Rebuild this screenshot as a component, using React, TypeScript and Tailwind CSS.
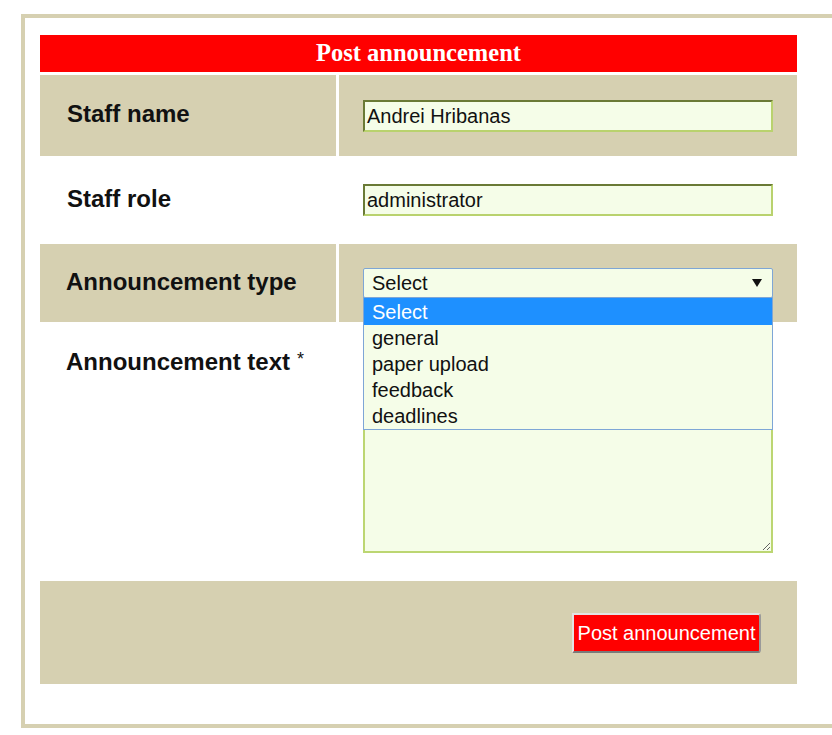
import React from "react";

const sans = { fontFamily: '"Liberation Sans", Arial, sans-serif' };

function TextInput({ value }: { value: string }) {
  return (
    <div
      className="w-[410px] h-[32px] bg-[#f5fde8] border-2 border-t-[#6a7a36] border-l-[#6a7a36] border-b-[#b9d26e] border-r-[#b9d26e] flex items-center pl-[2px] text-[20px] text-[#111] leading-none"
      style={sans}
    >
      {value}
    </div>
  );
}

const options = ["Select", "general", "paper upload", "feedback", "deadlines"];

export default function App() {
  return (
    <div className="w-[832px] h-[735px] bg-white overflow-hidden pt-[14px] pl-[21px]" style={sans}>
      <div className="w-[830px] border-l-4 border-t-4 border-b-4 border-[#d6d0b1] pt-[17px] pl-[15px] pb-[40px]">
        <div className="w-[757px] flex flex-col gap-[3px]">
          {/* Header */}
          <div
            className="h-[37px] bg-[#ff0000] flex items-center justify-center text-white font-bold text-[24.5px]"
            style={{ fontFamily: '"Liberation Serif", "Times New Roman", serif' }}
          >
            Post announcement
          </div>

          {/* Row 1 */}
          <div className="grid grid-cols-[296px_458px] gap-[3px] h-[81px]">
            <div className="bg-[#d6d0b1] flex items-center pl-[27px] pb-[3px] font-bold text-[24px] text-[#111]">
              Staff name
            </div>
            <div className="bg-[#d6d0b1] flex items-center pl-[24px]">
              <TextInput value="Andrei Hribanas" />
            </div>
          </div>

          {/* Row 2 */}
          <div className="grid grid-cols-[296px_458px] gap-[3px] h-[82px]">
            <div className="bg-white flex items-center pl-[27px] pb-[3px] font-bold text-[24px] text-[#111]">
              Staff role
            </div>
            <div className="bg-white flex items-center pl-[24px]">
              <TextInput value="administrator" />
            </div>
          </div>

          {/* Row 3 */}
          <div className="grid grid-cols-[296px_458px] gap-[3px] h-[78px]">
            <div className="bg-[#d6d0b1] flex items-center pl-[26px] pb-[2px] font-bold text-[24px] text-[#111]">
              Announcement type
            </div>
            <div className="bg-[#d6d0b1] flex items-center pl-[24px] relative z-10">
              <div className="relative">
                <div className="w-[410px] h-[30px] bg-[#f5fde8] border border-[#7ea6d6] rounded-[2px] flex items-center justify-between pl-[8px] pr-[10px] text-[20px] text-[#111] leading-none">
                  <span>Select</span>
                  <svg width="10" height="9" viewBox="0 0 10 9">
                    <polygon points="0,0 10,0 5,8" fill="#111" />
                  </svg>
                </div>
                <div className="absolute left-0 top-[29px] w-[410px] bg-[#f5fde8] border border-[#7ea6d6] flex flex-col text-[20px] leading-none">
                  {options.map((o, i) => (
                    <div
                      key={o}
                      className={
                        i === 0
                          ? "h-[27px] bg-[#1e90ff] text-white flex items-center pl-[8px]"
                          : "h-[26px] text-[#111] flex items-center pl-[8px]"
                      }
                    >
                      {o}
                    </div>
                  ))}
                </div>
              </div>
            </div>
          </div>

          {/* Row 4 */}
          <div className="grid grid-cols-[296px_458px] gap-[3px] h-[253px]">
            <div className="bg-white pt-[24px] pl-[26px] text-[24px] leading-[26px] text-[#111]">
              <span className="font-bold">Announcement text</span>
              <span className="text-[18px] align-top relative top-[-3px] ml-[7px]">*</span>
            </div>
            <div className="bg-white pl-[24px] pt-[25px]">
              <textarea
                className="block w-[410px] h-[203px] bg-[#f5fde8] border-2 border-[#bcd672] outline-none"
                defaultValue=""
              />
            </div>
          </div>

          {/* Footer */}
          <div className="h-[103px] bg-[#d6d0b1] flex items-center justify-end pr-[36px]">
            <button
              className="h-[40px] w-[189px] bg-[#ff0000] text-white text-[20px] leading-none border-2 border-t-[#e4e4e4] border-l-[#e4e4e4] border-b-[#7a7a7a] border-r-[#9a9a9a] rounded-r-[3px] flex items-center justify-center"
              style={sans}
            >
              Post announcement
            </button>
          </div>
        </div>
      </div>
    </div>
  );
}
